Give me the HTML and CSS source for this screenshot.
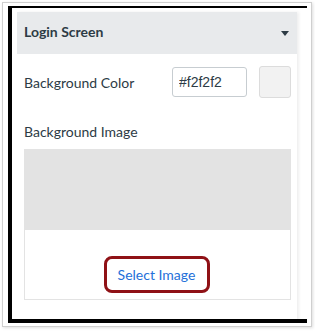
FILE: index.html
```html
<!DOCTYPE html>
<html lang="en">
<head>
  <meta charset="UTF-8">
  <title>Login Screen</title>
  <link rel="stylesheet" href="styles.css">
</head>
<body>
  <div class="frame">
    <div class="crop">
      <div class="panel">
        <div class="panel-head">
          <span>Login Screen</span>
          <span class="caret"></span>
        </div>
        <div class="panel-body">
          <div class="row">
            <label>Background Color</label>
            <input class="hex" value="#f2f2f2">
            <div class="swatch"></div>
          </div>
          <div class="label-img">Background Image</div>
          <div class="preview"></div>
          <div class="preview-foot">
            <a class="select-btn" href="#">Select Image</a>
          </div>
        </div>
      </div>
    </div>
  </div>
</body>
</html>
```

FILE: styles.css
```css
html, body {
  margin: 0;
  background: #fff;
}
body {
  width: 315px;
  height: 332px;
  font-family: Lato, 'Open Sans', sans-serif;
  color: #2d3b45;
}
.frame {
  margin: 2px 3px 3px 2px;
  height: 325px;
  border: 1px solid #cfcfcf;
  box-shadow: 1px 1px 3px #0002;
  box-sizing: border-box;
  padding: 3px 0 0 5px;
}
.crop {
  width: 299px;
  height: 317px;
  border-left: 4px solid #000;
  border-top: 2px solid #000;
  border-bottom: 4px solid #000;
  box-sizing: border-box;
  padding: 4px 0 0 5px;
  overflow: hidden;
}
.panel {
  width: 280px;
  height: 320px;
  background: #fff;
  box-shadow: 2px 0 3px #0001;
}
.panel-head {
  height: 42px;
  box-sizing: border-box;
  background: #e8eaec;
  display: flex;
  align-items: center;
  justify-content: space-between;
  padding: 0 8px 3px 7px;
  font-weight: bold;
  font-size: 14px;
}
.caret {
  width: 0;
  height: 0;
  border-left: 4px solid transparent;
  border-right: 4px solid transparent;
  border-top: 5px solid #2d3b45;
  margin-top: 3px;
}
.panel-body {
  padding: 0 6px 0 7px;
}
.row {
  display: flex;
  align-items: center;
  padding-top: 12px;
  height: 32px;
}
.row label {
  font-size: 14px;
  width: 148px;
}
.hex {
  width: 75px;
  height: 30px;
  box-sizing: border-box;
  border: 1px solid #c7cdd1;
  border-radius: 3px;
  padding: 0 6px;
  font-family: 'Liberation Sans', Arial, sans-serif;
  font-size: 14px;
  color: #2d3b45;
  margin-right: 12px;
}
.swatch {
  width: 32px;
  height: 32px;
  box-sizing: border-box;
  background: #f2f2f2;
  border: 1px solid #dcdcdc;
  border-radius: 3px;
}
.label-img {
  font-size: 14px;
  margin-top: 25px;
  line-height: 18px;
}
.preview {
  margin-top: 8px;
  height: 81px;
  background: #e3e3e3;
}
.preview-foot {
  height: 70px;
  box-sizing: border-box;
  border: 1px solid #e3e3e3;
  border-top: none;
  display: flex;
  justify-content: center;
  padding-top: 26px;
}
.select-btn {
  width: 106px;
  height: 37px;
  box-sizing: border-box;
  border: 3px solid #8f1116;
  border-radius: 8px;
  display: flex;
  align-items: center;
  justify-content: center;
  color: #2470d9;
  font-size: 14px;
  text-decoration: none;
  margin-left: -2px;
}
```
